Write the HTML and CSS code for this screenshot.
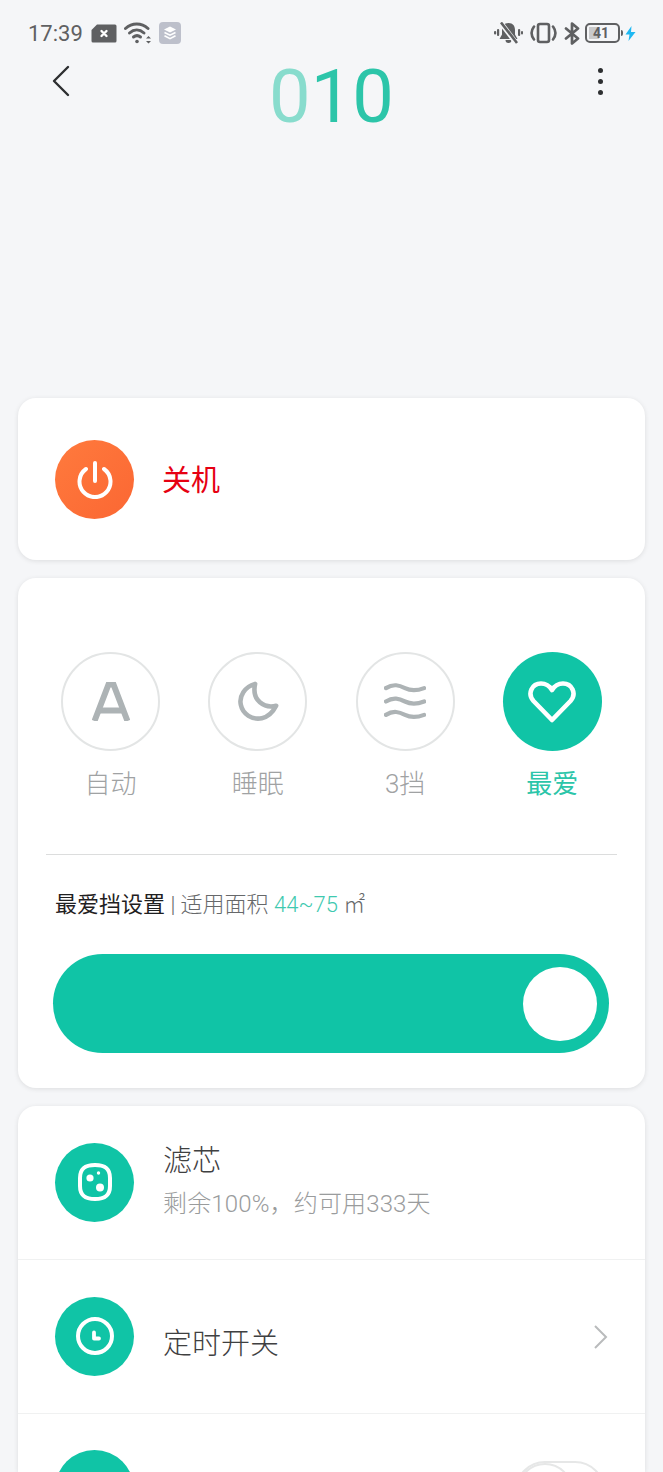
FILE: index.html
```html
<!DOCTYPE html>
<html lang="zh-CN">
<head>
    <meta charset="UTF-8">
    <meta name="viewport" content="width=device-width, initial-scale=1.0">
    <title>010</title>
    <link rel="stylesheet" href="styles.css">
</head>
<body>

<div class="top-area">
    <div class="status-bar">
        <div class="status-left">
            <span class="status-time">17:39</span>
            <svg width="26" height="19" viewBox="0 0 26 19"><path d="M6 0.500h18a1.500 1.500 0 0 1 1.500 1.500v15a1.500 1.500 0 0 1-1.500 1.500H2a1.500 1.500 0 0 1-1.500-1.500V6z" fill="#5f6062"/><path d="M10.500 7l5 5M15.500 7l-5 5" stroke="#fff" stroke-width="2.400" stroke-linecap="round"/></svg>
            <svg width="28" height="22" viewBox="0 0 28 22" fill="none" stroke="#5f6062" stroke-width="3" stroke-linecap="round"><path d="M1.500 6.500c6.500-6 16-6 22.500 0"/><path d="M5.500 11c4.500-4 10-4 14.500 0"/><path d="M9.500 15c2.500-2 4.500-2 7 0"/><circle cx="13" cy="19.500" r="1.800" fill="#5f6062" stroke="none"/><path d="M24.500 14l-2.500 2.500h5zM24.500 21.500l-2.500-2.500h5z" fill="#5f6062" stroke="none"/></svg>
            <svg width="22" height="22" viewBox="0 0 22 22"><rect width="22" height="22" rx="4" fill="#bdc0cb"/><path d="M11 4.500l6 3-6 3-6-3z" fill="#fff"/><path d="M5.500 10.500l5.500 2.700 5.500-2.700M5.500 13.800l5.500 2.800 5.500-2.800" fill="none" stroke="#fff" stroke-width="1.600"/></svg>
        </div>
        <div class="status-right">
            <svg class="bell-icon" width="29" height="22" viewBox="0 0 29 22" fill="#5f6062"><path d="M14.500 1c4.500 0 6.500 3 6.500 7v4.500l2.500 4.500h-18l2.500-4.500V8c0-4 2-7 6.500-7zM11.500 18h6a3 3 0 0 1-6 0z"/><path d="M6.500 0.500l16 21" stroke="#f5f6f8" stroke-width="5"/><path d="M7 0.500l16 20.500" stroke="#5f6062" stroke-width="2.600"/><rect x="3" y="7" width="2.200" height="7" rx="1"/><rect x="0" y="9" width="2.200" height="3.500" rx="1"/><rect x="24" y="7" width="2.200" height="7" rx="1"/><rect x="27" y="9" width="2" height="3.500" rx="1"/></svg>
            <svg class="vibrate-icon" width="27" height="22" viewBox="0 0 27 22" fill="none" stroke="#5f6062" stroke-width="2.600" stroke-linecap="round"><rect x="8" y="2" width="11" height="18" rx="2"/><path d="M4 4.500c-3 4-3 9 0 13M23 4.500c3 4 3 9 0 13"/></svg>
            <svg width="16" height="23" viewBox="0 0 16 23" fill="none" stroke="#5f6062" stroke-width="2.700" stroke-linejoin="round" stroke-linecap="round"><path d="M2 6.500l12 10-6 5V1.500l6 5-12 10"/></svg>
            <div class="battery"><span class="battery-fill"></span><span class="battery-num">41</span></div>
            <svg width="11" height="15" viewBox="0 0 11 15"><path d="M6.500 0L0.500 8.500h4L3.500 15l7-9H6z" fill="#1fb8f2"/></svg>
        </div>
    </div>
    <div class="title-bar">
        <svg width="20" height="32" viewBox="0 0 20 32" class="back-icon" fill="none" stroke="#2d2f31" stroke-width="2.400" stroke-linecap="round" stroke-linejoin="round"><path d="M17 2L3 16l14 14"/></svg>
        <h1 class="device-code"><span class="code-light">0</span>10</h1>
        <div class="more-icon"><span></span><span></span><span></span></div>
    </div>
</div>

<div class="card power-card">
    <div class="round-icon orange">
        <svg width="40" height="40" viewBox="0 0 40 40" fill="none" stroke="#fff" stroke-width="4" stroke-linecap="round"><path d="M11 10a15.500 15.500 0 1 0 18 0"/><path d="M20 4v18"/></svg>
    </div>
    <span class="power-label">关机</span>
</div>

<div class="card mode-card">
    <div class="mode-list">
        <div class="mode-item">
            <div class="mode-circle">
                <svg width="38" height="39" viewBox="0 0 38 39" fill="none" stroke="#adb3b5" stroke-width="6"><path d="M2.500 39L16.500 2.500h5L35.500 39"/><path d="M8 28.500h22"/></svg>
            </div>
            <span class="mode-name">自动</span>
        </div>
        <div class="mode-item">
            <div class="mode-circle">
                <svg width="42" height="42" viewBox="0 0 44 44" fill="none" stroke="#adb3b5" stroke-width="4.800" stroke-linejoin="round"><path d="M19 3C8 6 2 16 4 25c2 10 12 16 22 14 7-1.500 12-7 15-13-12 3-26-5-22-23z"/></svg>
            </div>
            <span class="mode-name">睡眠</span>
        </div>
        <div class="mode-item">
            <div class="mode-circle">
                <svg width="42" height="37" viewBox="0 0 44 38" fill="none" stroke="#adb3b5" stroke-width="4.400" stroke-linecap="round"><path d="M2 5c8-5 14-3 20 0s12 3 20 0"/><path d="M2 19c8-5 14-3 20 0s12 3 20 0"/><path d="M2 33c8-5 14-3 20 0s12 3 20 0"/></svg>
            </div>
            <span class="mode-name">3挡</span>
        </div>
        <div class="mode-item active">
            <div class="mode-circle">
                <svg width="48" height="42" viewBox="0 0 48 42" fill="none" stroke="#fff" stroke-width="4.600" stroke-linejoin="round"><path d="M24 39L5.500 20C-1 12.500 4 2.500 13 2.500c5 0 8.500 2.500 11 6.500 2.500-4 6-6.500 11-6.500 9 0 14 10 7.500 17.500z"/></svg>
            </div>
            <span class="mode-name">最爱</span>
        </div>
    </div>
    <div class="mode-divider"></div>
    <p class="area-line"><span class="area-title">最爱挡设置</span> | 适用面积 <span class="area-value">44~75</span> ㎡</p>
    <div class="fan-slider"><div class="fan-knob"></div></div>
</div>

<div class="card list-card">
    <div class="list-row">
        <div class="round-icon green">
            <svg width="34" height="38" viewBox="0 0 34 38" fill="#fff"><path d="M17 2c9 0 15 3 15 13v8c0 10-6 13-15 13S2 33 2 23v-8C2 5 8 2 17 2z" fill="none" stroke="#fff" stroke-width="4"/><circle cx="12" cy="15" r="3.600"/><circle cx="20.500" cy="10" r="1.700"/><circle cx="22" cy="24.500" r="4"/></svg>
        </div>
        <div class="row-text">
            <span class="row-title">滤芯</span>
            <span class="row-sub">剩余100%，约可用333天</span>
        </div>
    </div>
    <div class="list-row">
        <div class="round-icon green">
            <svg width="38" height="38" viewBox="0 0 38 38" fill="none" stroke="#fff"><circle cx="19" cy="19" r="17" stroke-width="4"/><path d="M18 15.500v6h5" stroke-width="3.800" stroke-linecap="round" stroke-linejoin="round"/></svg>
        </div>
        <span class="row-title row-title-low">定时开关</span>
        <svg class="row-arrow" width="15" height="24" viewBox="0 0 15 24" fill="none" stroke="#b9bbbc" stroke-width="2"><path d="M2 1l11 11L2 23"/></svg>
    </div>
    <div class="list-row last-row">
        <div class="round-icon green">
            <svg width="38" height="38" viewBox="0 0 38 38" fill="none" stroke="#fff" stroke-width="3.400" stroke-linecap="round"><path d="M19 3v14"/></svg>
        </div>
        <div class="row-switch"><span class="switch-knob"></span></div>
    </div>
</div>

</body>
</html>
```

FILE: styles.css
```css
html, body {
    margin: 0;
    padding: 0;
    height: 1472px;
    overflow: hidden;
    background-color: #f5f6f8;
    font-family: Roboto, "Noto Sans CJK SC", sans-serif;
}

.top-area {
    height: 398px;
}

.status-bar {
    display: flex;
    justify-content: space-between;
    align-items: center;
    height: 22px;
    padding: 22px 27px 0 28px;
}

.status-left, .status-right {
    display: flex;
    align-items: center;
}

.status-left {
    gap: 7px;
}

.status-right {
    gap: 5px;
}

.status-time {
    font-size: 22px;
    color: #5f6062;
    margin-right: 1px;
}

.bell-icon, .vibrate-icon {
    margin-right: 2px;
}

.battery {
    position: relative;
    box-sizing: border-box;
    display: flex;
    align-items: center;
    justify-content: center;
    width: 35px;
    height: 20px;
    padding-right: 3px;
    border: 2px solid #5f6062;
    border-radius: 5px;
}

.battery::after {
    content: "";
    position: absolute;
    right: -5px;
    top: 5px;
    width: 2px;
    height: 6px;
    background-color: #5f6062;
    border-radius: 0 2px 2px 0;
}

.battery-fill {
    position: absolute;
    left: 2px;
    top: 2px;
    bottom: 2px;
    width: 10px;
    background-color: #c9cacc;
}

.battery-num {
    position: relative;
    font-size: 14px;
    font-weight: 700;
    line-height: 1;
    color: #5f6062;
}

.title-bar {
    display: grid;
    grid-template-columns: 1fr auto 1fr;
    align-items: start;
    padding: 0 51px;
}

.back-icon {
    margin-top: 21px;
}

.device-code {
    margin: 11px 0 0 0;
    font-size: 74px;
    font-weight: 400;
    line-height: 84px;
    color: #2cc5a9;
}

.code-light {
    color: #88dccd;
}

.more-icon {
    justify-self: end;
    display: flex;
    flex-direction: column;
    gap: 6px;
    margin: 24px 9px 0 0;
}

.more-icon span {
    width: 5px;
    height: 5px;
    border-radius: 50%;
    background-color: #2d2f31;
}

.card {
    margin: 0 18px 18px 18px;
    background-color: #fff;
    border-radius: 18px;
    box-shadow: 0 1px 5px rgba(0, 0, 0, 0.1);
}

.round-icon {
    flex-shrink: 0;
    display: flex;
    justify-content: center;
    align-items: center;
    width: 79px;
    height: 79px;
    border-radius: 50%;
}

.round-icon.green {
    background-color: #10c4a6;
}

.round-icon.orange {
    background: linear-gradient(135deg, #ff7a3d, #fb6733);
}

.power-card {
    display: flex;
    align-items: center;
    height: 162px;
    padding-left: 37px;
}

.power-label {
    margin: 0 0 2px 28px;
    font-size: 29px;
    font-weight: 400;
    color: #e60012;
}

.mode-card {
    height: 510px;
    box-sizing: border-box;
    padding-top: 74px;
}

.mode-list {
    display: grid;
    grid-template-columns: repeat(4, 1fr);
    padding: 0 19px;
}

.mode-item {
    display: flex;
    flex-direction: column;
    align-items: center;
}

.mode-circle {
    box-sizing: border-box;
    display: flex;
    justify-content: center;
    align-items: center;
    width: 99px;
    height: 99px;
    border: 2px solid #e3e5e5;
    border-radius: 50%;
}

.mode-name {
    margin-top: 15px;
    font-size: 26px;
    font-weight: 300;
    line-height: 36px;
    color: #a0a2a3;
}

.mode-item.active .mode-circle {
    background-color: #10c4a6;
    border: none;
}

.mode-item.active .mode-name {
    color: #2cc5a9;
    font-weight: 400;
}

.mode-divider {
    height: 1px;
    margin: 52px 28px 0 28px;
    background-color: #dcdddd;
}

.area-line {
    margin: 33px 0 0 37px;
    font-size: 22px;
    font-weight: 300;
    line-height: 34px;
    color: #66686a;
}

.area-title {
    font-weight: 400;
    color: #1f2021;
}

.area-value {
    color: #3fc9b0;
}

.fan-slider {
    box-sizing: border-box;
    display: flex;
    justify-content: flex-end;
    align-items: center;
    width: 556px;
    height: 99px;
    margin: 32px 0 0 35px;
    padding-right: 12px;
    background-color: #10c4a6;
    border-radius: 50px;
}

.fan-knob {
    width: 74px;
    height: 74px;
    border-radius: 50%;
    background-color: #fff;
}

.list-card {
    margin-bottom: 0;
    border-radius: 18px 18px 0 0;
}

.list-row {
    display: flex;
    align-items: center;
    box-sizing: border-box;
    height: 154px;
    padding: 0 37px;
    border-bottom: 1px solid #f0f1f1;
}

.list-row .round-icon {
    margin-bottom: 1px;
}

.last-row {
    align-items: flex-start;
    height: 58px;
    padding-top: 36px;
    border-bottom: none;
    overflow: hidden;
}

.row-text {
    display: flex;
    flex-direction: column;
    margin: 0 0 2px 29px;
}

.row-title {
    font-size: 29px;
    font-weight: 300;
    line-height: 42px;
    color: #3f4041;
}

.row-title-low {
    margin: 14px 0 0 29px;
}

.row-sub {
    margin-top: 2px;
    font-size: 24px;
    font-weight: 300;
    letter-spacing: 0.15px;
    line-height: 40px;
    color: #9a9c9d;
}

.row-arrow {
    margin-left: auto;
}

.row-switch {
    flex-shrink: 0;
    box-sizing: border-box;
    width: 90px;
    height: 60px;
    margin: 11px 3px 0 auto;
    border: 2px solid #e6e7e7;
    border-radius: 30px;
}

.switch-knob {
    display: block;
    box-sizing: border-box;
    width: 56px;
    height: 56px;
    border: 2px solid #e6e7e7;
    border-radius: 50%;
}
```
